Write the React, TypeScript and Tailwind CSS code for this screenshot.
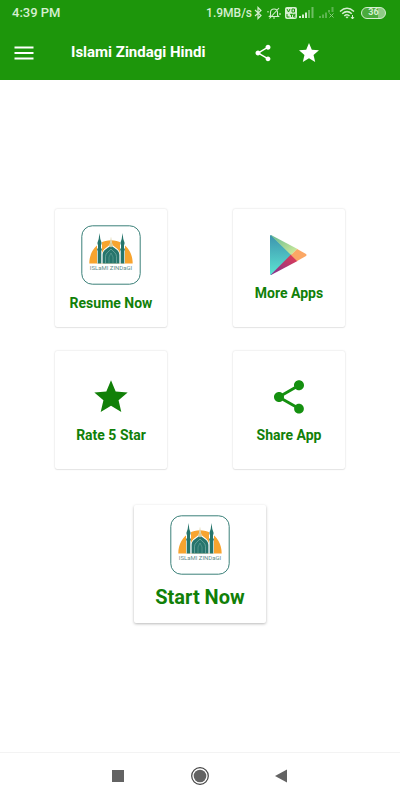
import type { ReactNode } from "react";

const STAR = "M12 17.27 18.18 21l-1.64-7.03L22 9.24l-7.19-.61L12 2 9.19 8.63 2 9.24l5.46 4.73L5.82 21z";
const SHARE =
  "M18 16.08c-.76 0-1.44.3-1.96.77L8.91 12.7c.05-.23.09-.46.09-.7s-.04-.47-.09-.7l7.05-4.11c.54.5 1.25.81 2.04.81 1.66 0 3-1.34 3-3s-1.34-3-3-3-3 1.34-3 3c0 .24.04.47.09.7L8.04 9.81C7.5 9.31 6.79 9 6 9c-1.66 0-3 1.34-3 3s1.34 3 3 3c.79 0 1.5-.31 2.04-.81l7.12 4.16c-.05.21-.08.43-.08.65 0 1.61 1.31 2.92 2.92 2.92s2.92-1.31 2.92-2.92-1.31-2.92-2.92-2.92z";

function Glyph({ d, className }: { d: string; className: string }) {
  return (
    <svg viewBox="0 0 24 24" className={className} fill="currentColor" aria-hidden="true">
      <path d={d} />
    </svg>
  );
}

function MosqueLogo() {
  return (
    <svg viewBox="0 0 60 60" className="size-15" aria-hidden="true">
      <rect x="0.8" y="0.8" width="58.4" height="58.4" rx="10.5" fill="#fff" stroke="#3b8079" />
      <path d="M8.3 38.500C8.300 29 13 21.500 19.500 18C25.500 14.300 34.500 14.300 40.500 18C47 21.500 51.700 29 51.700 38.500Z" fill="#f8a42f" />
      <g fill="#fff">
        <path d="M16 38.500V18L18.500 8L21 18V38.500ZM39 38.500V18L41.500 8L44 18V38.500Z" />
        <path d="M20.800 38.500V30C20.800 25 25.500 22.500 28.500 20L30 14L31.500 20C34.500 22.500 39.200 25 39.200 30V38.500Z" />
      </g>
      <g fill="#26756c">
        <path d="M18.500 8L19.300 14L20.500 17.500V19.500H20V23.500H20.800V25.500H20.300V38.500H16.700V25.500H16.200V23.500H17V19.500H16.500V17.500L17.700 14Z" />
        <path d="M41.500 8L42.300 14L43.500 17.500V19.500H43V23.500H43.800V25.500H43.300V38.500H39.700V25.500H39.200V23.500H40V19.500H39.500V17.500L40.700 14Z" />
        <path d="M21.600 38.500V30C21.600 25.500 26 23.500 28.700 21.500L30 20L31.300 21.500C34 23.500 38.400 25.500 38.400 30V38.500Z" />
      </g>
      <path d="M30 11.500L30.900 18L32 20.500L30 22.500L28 20.500L29.100 18Z" fill="#d9cd9c" />
      <path
        d="M24.500 38.500V31.500C24.500 28 28 26.500 30 24C32 26.500 35.500 28 35.500 31.500V38.500"
        fill="none"
        stroke="#8fbab3"
        strokeWidth="0.6"
      />
      <path d="M28 38.500V32L30 28L32 32V38.500" fill="none" stroke="#8fbab3" strokeWidth="0.4" />
      <text x="30" y="45" textAnchor="middle" className="font-['Roboto',sans-serif] text-[6px] font-normal" fill="#5f8d8a">
        ISLaMI ZINDaGI
      </text>
    </svg>
  );
}

function PlayLogo() {
  return (
    <svg viewBox="0 0 38 40" className="h-10 w-[38px]" aria-hidden="true">
      <defs>
        <linearGradient id="playBlue" x1="0" y1="0" x2="0" y2="1">
          <stop offset="0" stopColor="#3d93ae" />
          <stop offset="1" stopColor="#5ce4d2" />
        </linearGradient>
        <linearGradient id="playRed" x1="0" y1="1" x2="1" y2="0">
          <stop offset="0" stopColor="#7c3191" />
          <stop offset="1" stopColor="#e83d51" />
        </linearGradient>
        <linearGradient id="playGreen" x1="0" y1="0" x2="1" y2="1">
          <stop offset="0" stopColor="#61b891" />
          <stop offset="1" stopColor="#d8ee9b" />
        </linearGradient>
      </defs>
      <path d="M0 1Q0 0 1 0L22 20L1 40Q0 40 0 39Z" fill="url(#playBlue)" />
      <path d="M.5 0Q1 0 2 .5L27.500 14L21 20Z" fill="url(#playGreen)" />
      <path d="M.5 40Q1 40 2 39.500L27.500 26L21 19.500Z" fill="url(#playRed)" />
      <path d="M27.200 14L36 19Q37 20 36 21L27.200 26L21 20Z" fill="#fba765" />
    </svg>
  );
}

function StatusIcons() {
  return (
    <div className="flex items-center text-[#d5efd0]">
      <span className="text-xs font-medium">1.9MB/s</span>
      <svg viewBox="0 0 10 14" className="ml-px h-3.5 w-2.5" fill="none" stroke="currentColor" strokeWidth="1.2" aria-hidden="true">
        <path d="M2 4L8 9.500L5 12.500V1.500L8 4.500L2 10" />
      </svg>
      <svg viewBox="0 0 14 14" className="ml-1 size-3.5" fill="none" stroke="currentColor" strokeWidth="1.1" aria-hidden="true">
        <path d="M3.500 9.500V6.500C3.500 4.500 5 3 7 3S10.500 4.500 10.500 6.500V9.500L11.500 10.500H2.500ZM6 12H8M2.500 12.500L12 2M1 6.500V5M13 7V9" />
      </svg>
      <svg viewBox="0 0 12 12" className="ml-1 size-3" aria-hidden="true">
        <rect width="12" height="12" rx="2" fill="currentColor" />
        <path d="M2 2L3.500 5L5 2M7 2H9.500V5H7ZM2 7V10H4.500M5 7.300H8M6.500 7V10M10.500 7.300H8.700V10H10.500M8.700 8.600H10.300" fill="none" stroke="#1d960b" />
      </svg>
      <svg viewBox="0 0 16 11" className="ml-0.5 h-[11px] w-4" fill="currentColor" aria-hidden="true">
        <path d="M0 9H2V11H0ZM3 7.500H5V11H3ZM6 5.500H8V11H6Z" />
        <path d="M9 3H11V11H9ZM12.500 0H14.500V11H12.500Z" opacity=".45" />
      </svg>
      <svg viewBox="0 0 16 11" className="ml-1 h-[11px] w-4" fill="currentColor" aria-hidden="true">
        <path d="M0 9H2V11H0ZM3 7.500H5V11H3ZM6 5.500H8V11H6ZM9 3H11V5.500H9ZM12.500 0H14.500V5H12.500Z" opacity=".35" />
        <path d="M10.500 6.500L14.500 10.500M14.500 6.500L10.500 10.500" stroke="currentColor" opacity=".6" />
      </svg>
      <svg viewBox="0 0 16 12" className="ml-1 h-3 w-4" fill="none" stroke="currentColor" strokeWidth="1.500" aria-hidden="true">
        <path d="M1 4.500Q8-2 15 4.500M3.200 6.800Q8 2.500 12.800 6.800M5.300 9Q8 6.500 10.500 9" />
        <path d="M6.500 10Q8 9 9.500 10L8 11.500Z" fill="currentColor" stroke="none" />
        <path d="M13.500 8V12M12 10L13.500 12L15 10" strokeWidth="1" />
      </svg>
      <span className="ml-1.5 flex h-3 w-[25px] items-center justify-center rounded-full border border-current bg-linear-to-r from-white/20 from-70% to-white/50 to-70% text-[9px] leading-none font-bold">
        36
      </span>
    </div>
  );
}

function Card({ label, children, large = false }: { label: string; children: ReactNode; large?: boolean }) {
  return (
    <button
      type="button"
      className={
        large
          ? "flex h-[118px] w-[132px] flex-col items-center rounded-xs bg-white pt-2.5 text-xl leading-6 font-bold shadow-[0_1px_3px_rgba(0,0,0,0.28)]"
          : "flex h-[118px] w-28 flex-col items-center rounded-xs bg-white pt-4 text-sm leading-5 font-bold shadow-[0_0_2px_rgba(0,0,0,0.18),0_1px_1px_rgba(0,0,0,0.06)]"
      }
    >
      {children}
      <span className={large ? "mt-2.5" : "mt-2"}>{label}</span>
    </button>
  );
}

export default function App() {
  return (
    <div className="flex min-h-screen flex-col bg-white font-['Roboto',sans-serif]">
      <header className="bg-[#1d960b] text-white">
        <div className="flex h-[25px] items-center justify-between pr-3.5 pl-3">
          <span className="text-[13px] font-medium text-[#d5efd0]">4:39 PM</span>
          <StatusIcons />
        </div>
        <div className="flex h-[55px] items-center pl-3">
          <button type="button" aria-label="Menu">
            <Glyph d="M2.500 5.500H21.500V7.500H2.500ZM2.500 11H21.500V13H2.500ZM2.500 16.500H21.500V18.500H2.500Z" className="size-6" />
          </button>
          <h1 className="w-[181px] pl-[35px] text-[15px] font-bold whitespace-nowrap">Islami Zindagi Hindi</h1>
          <button type="button" aria-label="Share" className="ml-9">
            <Glyph d={SHARE} className="size-5" />
          </button>
          <button type="button" aria-label="Rate" className="ml-6">
            <Glyph d={STAR} className="size-6" />
          </button>
        </div>
      </header>

      <main className="flex flex-1 flex-col items-center justify-center text-[#118008]">
        <div className="grid w-full grid-cols-2 justify-items-center gap-y-6 px-[22px]">
          <Card label="Resume Now">
            <MosqueLogo />
          </Card>
          <Card label="More Apps">
            <span className="pt-2.5">
              <PlayLogo />
            </span>
          </Card>
          <Card label="Rate 5 Star">
            <span className="pt-2.5">
              <Glyph d={STAR} className="size-10" />
            </span>
          </Card>
          <Card label="Share App">
            <span className="pt-2.5 text-[#159010]">
              <Glyph d={SHARE} className="size-10" />
            </span>
          </Card>
        </div>
        <div className="mt-9">
          <Card label="Start Now" large>
            <MosqueLogo />
          </Card>
        </div>
      </main>

      <nav aria-label="System" className="flex h-12 items-center justify-center gap-[62px] border-t border-[#f3f3f3] pb-0.5 text-[#636363]">
        <button type="button" aria-label="Recent apps">
          <svg viewBox="0 0 20 20" className="size-5" fill="currentColor">
            <path d="M4 4H16V16H4Z" />
          </svg>
        </button>
        <button type="button" aria-label="Home">
          <svg viewBox="0 0 20 20" className="size-5" fill="currentColor">
            <circle cx="10" cy="10" r="6.300" />
            <circle cx="10" cy="10" r="8.300" fill="none" stroke="#444" strokeWidth="1.200" />
          </svg>
        </button>
        <button type="button" aria-label="Back">
          <svg viewBox="0 0 20 20" className="size-5" fill="currentColor">
            <path d="M3 10L15 3.500V16.500Z" />
          </svg>
        </button>
      </nav>
    </div>
  );
}
